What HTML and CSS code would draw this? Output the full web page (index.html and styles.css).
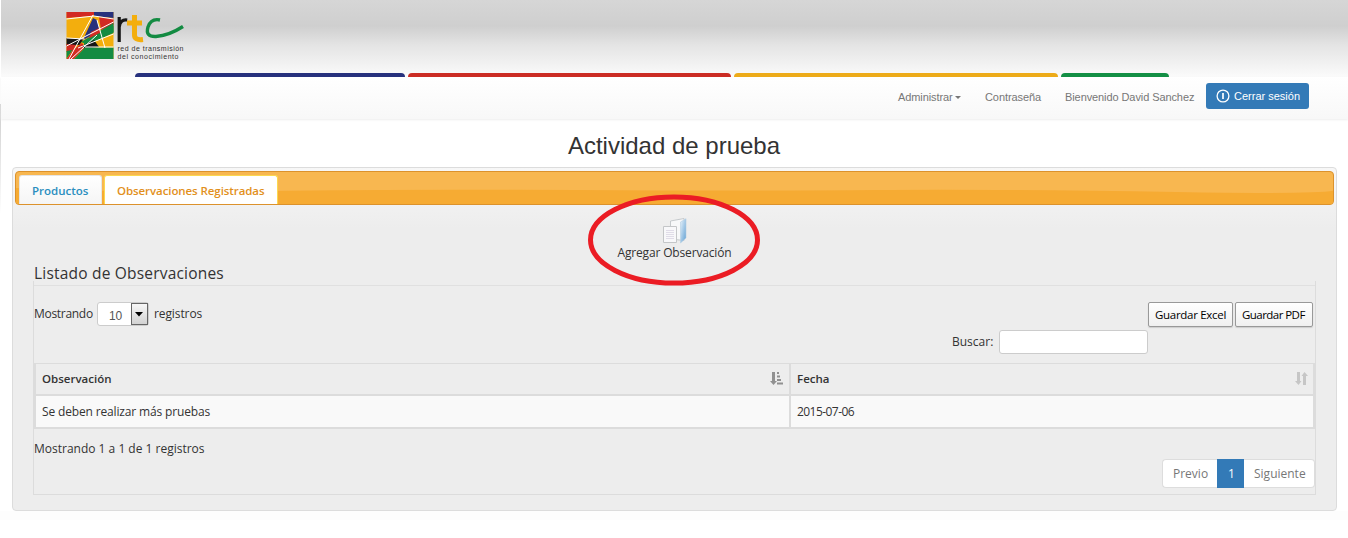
FILE: index.html
```html
<!DOCTYPE html>
<html lang="es">
<head>
<meta charset="utf-8">
<title>Actividad de prueba</title>
<link rel="stylesheet" href="styles.css">
</head>
<body>
<header class="banner">
  <svg class="logo" width="120" height="50" viewBox="0 0 120 50">
    <rect x="0.500" y="0" width="47" height="47" fill="#f3ae0d"/>
    <path d="M.5 0H29L27 4 .5 6z" fill="#d22a23"/>
    <path d="M28 0h19.500v6L28 4z" fill="#27317d"/>
    <path d="M33 5l14.500 1.500v7L35 18z" fill="#d22a23"/>
    <path d="M47.500 11v9L20 32l-5-2z" fill="#138b42"/>
    <path d="M27 6l4 2 3 11-17 9z" fill="#27317d"/>
    <path d="M25 20l8-4 3 9-14 6z" fill="#d22a23"/>
    <path d="M18 29l29.500-15v7L18 34z" fill="#138b42"/>
    <path d="M.5 26l17 1-4 6-13 1z" fill="#171717"/>
    <path d="M.5 32l10 1-4 6-6 1z" fill="#d22a23"/>
    <path d="M.5 39l6-1-6 9z" fill="#138b42"/>
    <path d="M7 38l9-7 3 4L8 47H.5z" fill="#d22a23"/>
    <path d="M16 34l12-6 5 7-14 2z" fill="#171717"/>
    <path d="M19 35.500h28.500V47H8z" fill="#138b42"/>
    <path d="M3 47L27 3M.5 34L47.500 10M31 8l8 28M.5 7L28 4l19.500 3M.5 26l18 1M12 36l35.500-14M5 47l26-24M19 35h28.500" fill="none" stroke="#fff" stroke-width="1"/>
    <path d="M53.200 30V5M53.200 15q1-8 8-7" fill="none" stroke="#171717" stroke-width="3.2"/>
    <path d="M68.500 3v20q0 5.500 8.500 4.500M61 11h15" fill="none" stroke="#f3ae0d" stroke-width="5"/>
    <path d="M94 8q-9-2-12 7-3 10 8 9.500 13-1 27-10" fill="none" stroke="#138b42" stroke-width="3.400"/>
    <text class="logo-text" x="51.500" y="38.500" textLength="66">red de transmisión</text>
    <text class="logo-text" x="51.500" y="46.500" textLength="61">del conocimiento</text>
  </svg>
  <div class="stripes"><i class="navy"></i><i class="red"></i><i class="gold"></i><i class="green"></i></div>
</header>
<nav class="nav">
  <a class="n1">Administrar<b class="caret"></b></a>
  <a class="n2">Contraseña</a>
  <a class="n3">Bienvenido David Sanchez</a>
  <a class="logout"><svg width="14" height="14" viewBox="0 0 14 14"><circle cx="7" cy="7" r="5.9" fill="none" stroke="#fff" stroke-width="1.3"/><path d="M7 4v6" stroke="#fff" stroke-width="1.7"/></svg><span>Cerrar sesión</span></a>
</nav>
<h1 class="title">Actividad de prueba</h1>
<main class="panel">
  <div class="tabs">
    <svg class="wave" width="1318" height="32" viewBox="0 0 1318 32" preserveAspectRatio="none"><path d="M0 15Q120 20 250 18T560 17t300 0 300 2 158-4V32H0z" fill="#f6ab33"/></svg>
    <a class="tab"><span>Productos</span></a>
    <a class="tab active"><span>Observaciones Registradas</span></a>
  </div>
  <section class="add">
    <svg width="26" height="26" viewBox="0 0 26 26">
      <defs><linearGradient id="door" x1="0" y1="0" x2="1" y2="1"><stop offset="0" stop-color="#e6f1fa"/><stop offset="1" stop-color="#5f9fd3"/></linearGradient></defs>
      <path d="M8.500 3L22 .5v22L8.500 21z" fill="#f7f8f9" stroke="#c5c9cc"/>
      <path d="M24 .7V20l-5.500 5V4z" fill="url(#door)" stroke="#b4cfe3" stroke-width=".6"/>
      <path d="M1.500 8.500h13v16h-13z" fill="#f8f8fa" stroke="#c4c6c8"/>
      <path d="M4 12.500h8M4 14.500h8M4 16.500h8M4 18.500h8M4 20.500h8" stroke="#e0dce8"/>
    </svg>
    <span class="add-label">Agregar Observación</span>
    <svg class="ring" width="172" height="92" viewBox="0 0 172 92"><ellipse cx="86" cy="46" rx="83.500" ry="43" fill="none" stroke="#eb1c24" stroke-width="5"/></svg>
  </section>
  <h2 class="heading"><span>Listado de Observaciones</span></h2>
  <section class="box">
    <div class="tools">
      <label class="length"><span class="w-mos">Mostrando</span><span class="select"><span>10</span><i><svg width="9" height="5" viewBox="0 0 9 5"><path d="M0 0h8L4 4.500z"/></svg></i></span><span class="w-reg">registros</span></label>
      <label class="search"><span>Buscar:</span><input type="text"></label>
      <div class="export"><button>Guardar Excel</button><button>Guardar PDF</button></div>
    </div>
    <div class="table">
      <div class="cell head"><span>Observación</span>
        <svg width="13" height="13" viewBox="0 0 13 13" fill="#919191"><path d="M2 0h3v9h2l-3.500 4L0 9h2zM7 0h2v2H7zM7 3.500h3v2H7zM7 7h4v2H7zM7 10.500h6v2H7z"/></svg></div>
      <div class="cell head last"><span>Fecha</span>
        <svg width="13" height="13" viewBox="0 0 13 13" fill="#c6c6c6"><path d="M2 0h3v9h1.500l-3 4L0 9h2zM8 13h3V4h2L9.500 0 6.500 4H8z"/></svg></div>
      <div class="cell"><span class="c3">Se deben realizar más pruebas</span></div>
      <div class="cell"><span class="c4">2015-07-06</span></div>
    </div>
    <p class="info">Mostrando 1 a 1 de 1 registros</p>
    <div class="pager"><a class="prev">Previo</a><a class="on">1</a><a class="next">Siguiente</a></div>
  </section>
</main>
<div class="foot"></div>
</body>
</html>
```
FILE: styles.css
```css
* { box-sizing: border-box; }
body { margin: 0; height: 538px; overflow: hidden; background: linear-gradient(#ccc, #fff) 0 104px / 1px 110px no-repeat #fff; color: #333; font: 12px/17px "Open Sans", sans-serif; }
.banner { height: 77px; padding: 12px 0 0 66px; margin-left: 1px; padding-left: 65px; display: flex; flex-direction: column; background: linear-gradient(#d6d6d6 0, #cfcfcf 26px, #e4e4e4 45px, #fbfbfb 77px); }
.logo { display: block; flex: none; }
.logo-text { font: 7px "Liberation Sans", sans-serif; fill: #333; }
.stripes { display: flex; gap: 3px; margin: 11px 0 0 69px; }
.stripes i { height: 4px; border-radius: 4px 4px 0 0; }
.navy { width: 270px; background: #27317d; }
.red { width: 323px; background: #cb2c24; }
.gold { width: 324px; background: #edab19; }
.green { width: 108px; background: #138f45; }
.nav { height: 42px; margin-left: 1px; display: flex; justify-content: flex-end; padding: 6px 39px 0 0; background: linear-gradient(#fff, #f8f8f8); box-shadow: 0 1px 2px #eee; font: 11px/29px "Liberation Sans", sans-serif; letter-spacing: -.09px; color: #777; }
.nav a { white-space: nowrap; }
.n1 { width: 87px; }
.n2 { width: 80px; }
.n3 { width: 141px; }
.caret { display: inline-block; margin-left: 2px; vertical-align: 2px; border: 3px solid transparent; border-top-color: #777; border-bottom: 0; }
.logout { width: 103px; height: 26px; border-radius: 3px; background: #337ab7; color: #fff; display: flex; align-items: center; padding-left: 10px; gap: 4px; letter-spacing: 0; }
.title { margin: 11px 0 0; height: 37px; text-align: center; font: 24px/32px "Liberation Sans", sans-serif; color: #333; }
.panel { margin: 0 11px 0 12px; height: 344px; border: 1px solid #dcdcdc; border-radius: 4px; padding: 3px 2px 0; background: linear-gradient(#f7f7f7 0, #ededed 60px); }
.tabs { position: relative; height: 34px; margin-bottom: 1px; border: 1px solid #dc922c; border-radius: 4px; background: #f8b750; display: flex; gap: 2px; padding: 3px 0 0 3px; overflow: hidden; }
.wave { position: absolute; left: 0; top: 1px; }
.tab { position: relative; height: 29px; width: 83px; padding-left: 12px; border: 1px solid #e5e5e5; border-bottom: 0; border-radius: 3px 3px 0 0; background: linear-gradient(#fff, #f5f5f5); color: #2a8ebf; font-size: 11.5px; font-weight: 600; line-height: 30px; white-space: nowrap; }
.tab.active { width: 174px; height: 30px; border-color: #fbd850; background: #fff; color: #e2901c; letter-spacing: -.08px; }
.add { position: relative; height: 58px; display: flex; flex-direction: column; align-items: center; padding-top: 12px; }
.add-label { line-height: 18px; white-space: nowrap; letter-spacing: -.16px; }
.ring { position: absolute; left: 573px; top: -12px; }
.heading { margin: 0 0 0 19px; height: 17px; font-size: 15.5px; letter-spacing: .2px; line-height: 18px; font-weight: 500; white-space: nowrap; }
.box { margin: 0 18px; height: 214px; border: 1px solid #dcdcdc; border-top: 0; padding-top: 4px; }
.tools { height: 78px; border-top: 1px solid #e0e0e0; display: grid; grid-template-columns: 1fr 196px 167px; }
.length { display: flex; align-items: flex-start; padding-top: 16px; line-height: 23px; letter-spacing: -.1px; }
.w-mos { width: 63px; letter-spacing: -.3px; }
.select { width: 52px; height: 24px; border: 1px solid #ccc; border-radius: 3px; background: #fff; display: flex; justify-content: space-between; font: 12px/26px "Liberation Sans", sans-serif; color: #555; padding-left: 11px; margin-right: 5px; }
.select i { width: 17px; border: 1px solid #666; background: linear-gradient(#f7f7f7, #d2d2d2); display: flex; align-items: center; justify-content: center; }
.search { display: flex; align-items: flex-start; justify-content: space-between; padding-top: 44px; line-height: 23px; }
.search input { width: 149px; height: 24px; border: 1px solid #ccc; border-radius: 3px; background: #fff; }
.export { display: flex; gap: 2px; padding-top: 16px; }
.export button { height: 25px; border: 1px solid #999; border-radius: 2px; background: linear-gradient(#fff, #f0f0f0); color: #000; font: 11.5px "Open Sans", sans-serif; letter-spacing: -.3px; width: 85px; padding: 0 0 0 6px; text-align: left; white-space: nowrap; box-shadow: 0 1px 1px #ccc; }
.export button + button { width: 78px; letter-spacing: -.55px; }
.table { display: grid; grid-template-columns: 753px 522px; grid-template-rows: 30px 31px; gap: 2px; padding: 1px 0 2px 2px; background: #dcdcdc; height: 66px; }
.cell { background: #f9f9f9; padding: 0 6px; display: flex; align-items: center; justify-content: space-between; white-space: nowrap; }
.head { background: #ededed; font-weight: 600; font-size: 11.5px; line-height: 16px; padding-bottom: 1px; }
.last { padding-right: 5px; }
.c3 { letter-spacing: -.15px; }
.c4 { letter-spacing: -.55px; }
.info { margin: 11px 0 0; height: 19px; line-height: 18px; white-space: nowrap; }
.pager { display: flex; justify-content: flex-end; line-height: 28px; color: #777; }
.pager a { height: 29px; border: 1px solid #ddd; background: #fff; padding-left: 10px; }
.pager .prev { width: 55px; border-radius: 4px 0 0 4px; border-right: 0; }
.pager .on { width: 27px; background: #337ab7; border-color: #337ab7; color: #fff; }
.pager .next { width: 71px; border-radius: 0 4px 4px 0; border-left: 0; }
.foot { height: 9px; background: #fdfdfd; }
```
